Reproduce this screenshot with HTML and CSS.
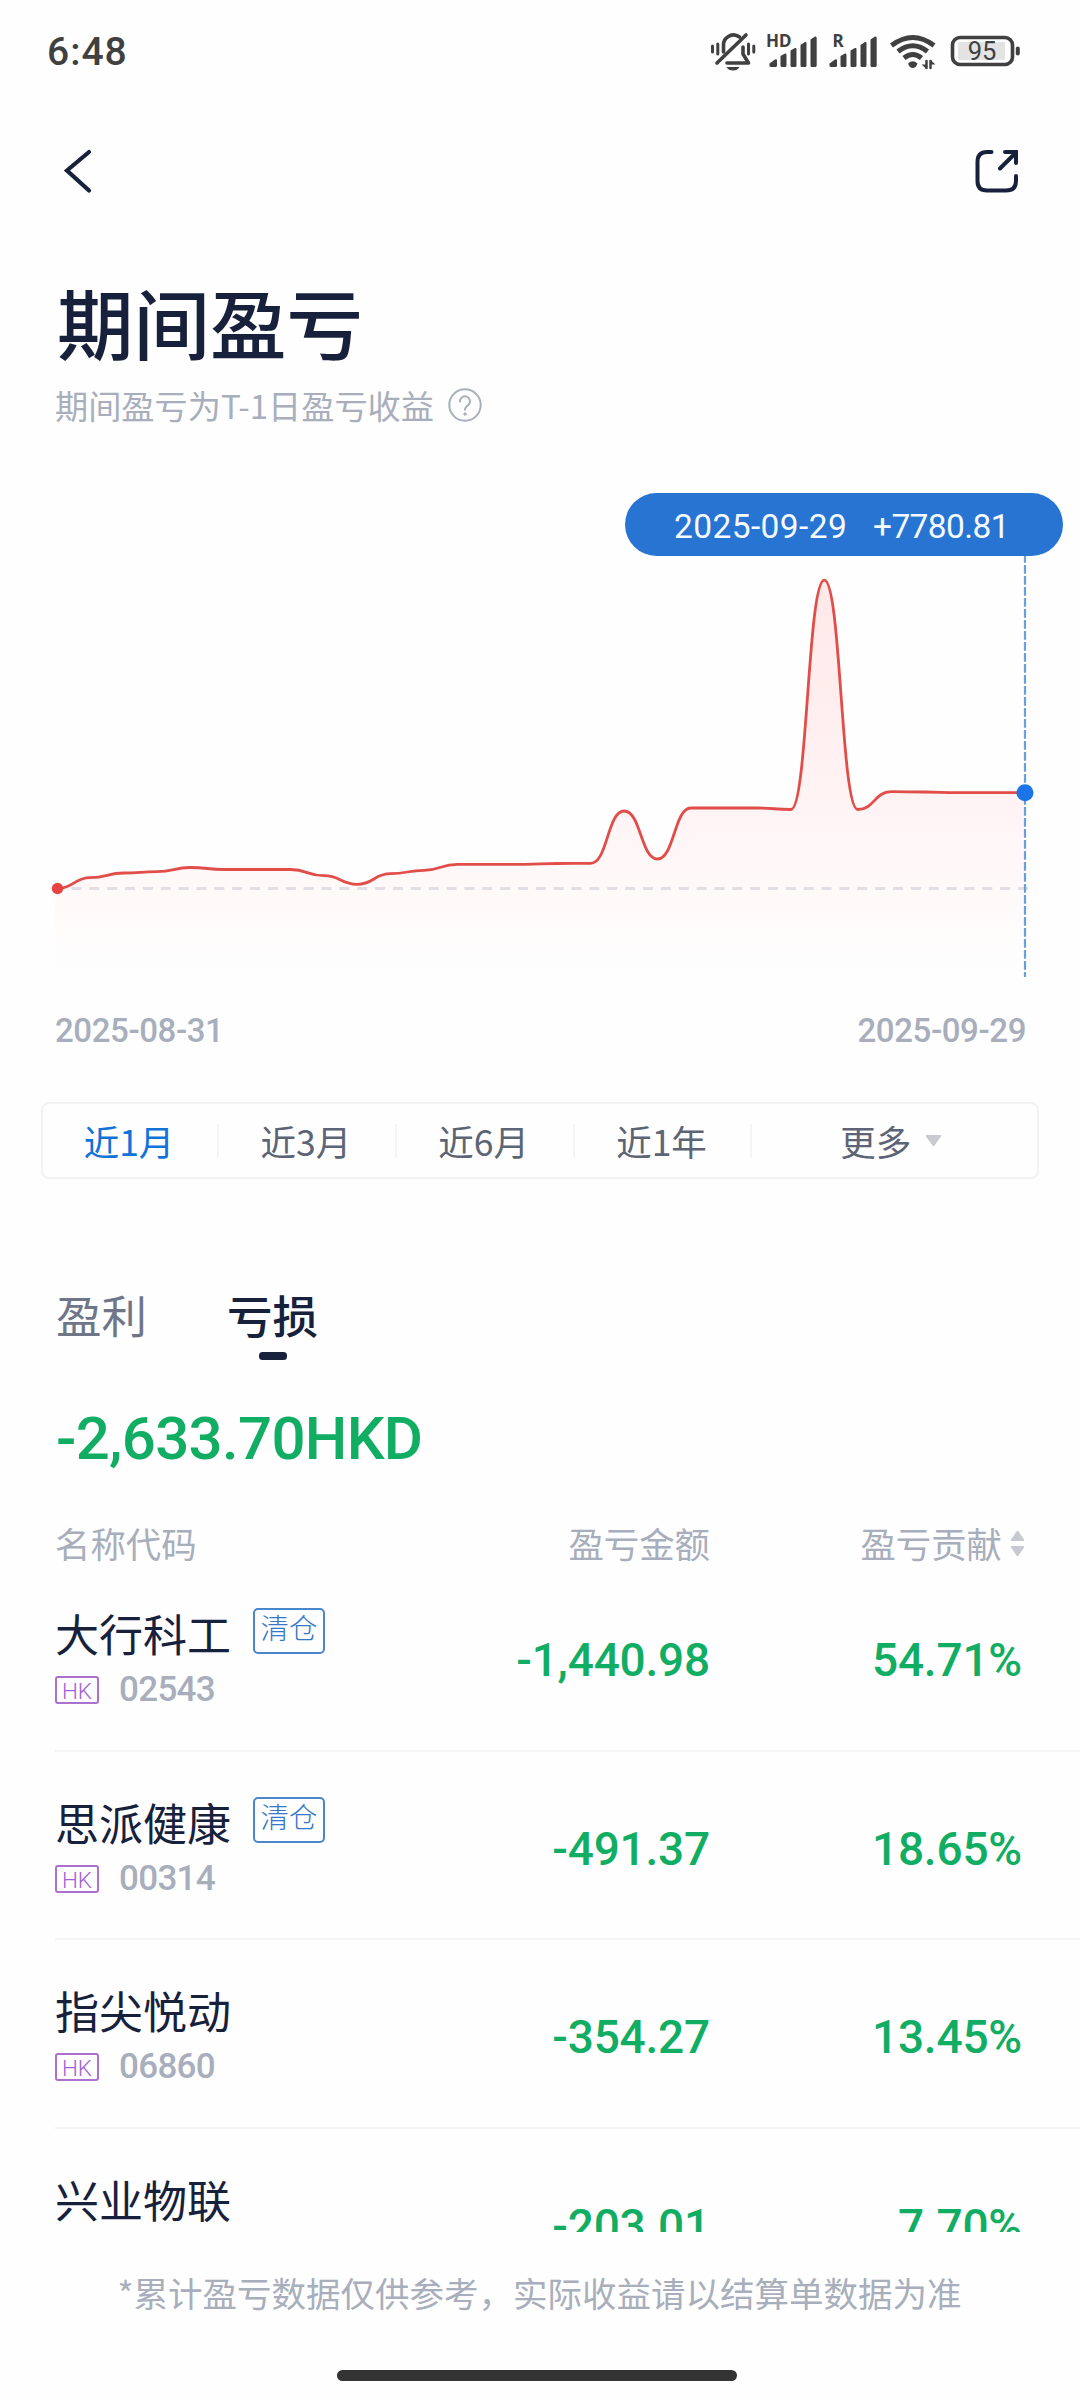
FILE: index.html
```html
<!DOCTYPE html>
<html lang="zh-CN">
<head>
<meta charset="utf-8">
<title>期间盈亏</title>
<link rel="stylesheet" href="styles.css">
</head>
<body>
<main class="screen">
  <header class="status">
    <span class="clock">6:48</span>
    <svg class="status-icons" width="320" height="50" viewBox="705 25 320 50" fill="none" stroke="#404040" stroke-width="3.6" stroke-linecap="round" stroke-linejoin="round">
      <path d="M712.500 46v6M717.800 44v10M753.800 46v6M748.500 44v10" stroke-width="3"/>
      <path d="M723.500 52V45a10 10 0 0 1 16-8"/>
      <path d="M743 47v7l5.500 9H727"/>
      <path d="M717 63L746 35"/>
      <path d="M726.500 67h13q-2 3.500-6.500 3.500t-6.500-3.500z" fill="#404040" stroke="none"/>
      <g fill="#404040" stroke="none">
        <text class="net" x="766" y="47">HD</text>
        <path id="bars" d="M769.500 63.500L775 59.500Q777 58.500 777 60.500V65.500Q777 67 775.500 67H771Q769 67 769.500 63.500zM780.500 56L785 53.500Q786.500 53 786.500 55V65.500Q786.500 67 785 67H782Q780.500 67 780.500 65.500zM790.500 50.500L795 48Q796.500 47.500 796.500 49V65.500Q796.500 67 795 67H792Q790.500 67 790.500 65.500zM800.500 45L805 42Q806.500 41.500 806.500 43V65.500Q806.500 67 805 67H802Q800.500 67 800.500 65.500zM810.500 39.500L815 36.500Q816.700 36 816.700 38V65.500Q816.700 67 815 67H812Q810.500 67 810.500 65.500z"/>
        <use href="#bars" x="60"/>
        <text class="net" x="832.500" y="47">R</text>
      </g>
      <g stroke-linecap="butt" stroke-width="5">
        <path d="M891.500 45.500Q912.800 29.500 934 45.500"/>
        <path d="M898 51.500Q912.800 40 927.500 51.500"/>
        <path d="M904 58Q912.800 51 921.500 58"/>
      </g>
      <path d="M908 63.500q4.800-4.500 9.500 0q-1.500 4.500-4.700 4.500t-4.800-4.500z" fill="#404040" stroke="none"/>
      <path d="M926.500 60v9l-5-4.500h5M930.500 69V60l5 4.500h-5" fill="#404040" stroke="none"/>
      <path d="M926.500 61v7M930.500 61v7" stroke-width="2.500"/>
      <rect x="952.500" y="37.500" width="60" height="27" rx="7.500"/>
      <rect x="958" y="42" width="47" height="18" rx="1" fill="#e3e3e3" stroke="none"/>
      <path d="M1017.800 48.500v5" stroke-width="4"/>
      <text class="battery" x="982" y="60" text-anchor="middle">95</text>
    </svg>
  </header>

  <nav class="topbar">
    <svg width="30" height="48" viewBox="63 147 30 48" fill="none" stroke="#17213c" stroke-width="4.200" stroke-linecap="round"><path d="M89 152L67 170.500L89 190.500"/></svg>
    <svg width="48" height="48" viewBox="973 146 48 48" fill="none" stroke="#17213c" stroke-width="4" stroke-linecap="round"><path d="M991.500 151H987Q977.500 151 977.500 161V180Q977.500 189.500 987 189.500H1006Q1016 189.500 1016 180V175M1000 167.500L1016 151.500M1005 151H1016V162"/></svg>
  </nav>

  <section class="heading">
    <h1>期间盈亏</h1>
    <p>期间盈亏为T-1日盈亏收益
      <svg width="36" height="36" viewBox="0 0 36 36" fill="none" stroke="#a8aebb" stroke-width="2" stroke-linecap="round"><circle cx="18" cy="18" r="15.700"/><path d="M13 14.500a5 5 0 1 1 8.500 3.300q-3.500 2.600-3.500 5"/><circle cx="18" cy="27" r="1.200" fill="#a8aebb" stroke-width="1"/></svg>
    </p>
  </section>

  <section class="chart">
    <svg width="1080" height="490" viewBox="0 492 1080 490" fill="none">
      <defs><linearGradient id="area" gradientUnits="userSpaceOnUse" x1="0" y1="580" x2="0" y2="972"><stop offset="0" stop-color="#ffe8e8"/><stop offset=".55" stop-color="#fff3f4"/><stop offset=".79" stop-color="#fff9f9"/><stop offset="1" stop-color="#fefefe"/></linearGradient></defs>
      <path id="fill" fill="url(#area)"/>
      <path d="M53.600 888.500H1028" stroke="#dfdfe5" stroke-width="3" stroke-dasharray="10 7.860"/>
      <path id="line" stroke="#e14d49" stroke-width="2.800" stroke-linejoin="round"/>
      <path d="M1025 554V977" stroke="#6b9edf" stroke-width="2.200" stroke-dasharray="8.800 2.200"/>
      <circle cx="57.500" cy="888.500" r="5.700" fill="#e84343"/>
      <circle cx="1025" cy="792.700" r="8.500" fill="#1c75e6"/>
    </svg>
    <div class="tip"><span>2025-09-29</span><span class="gain">+7780.81</span></div>
  </section>
  <div class="dates"><span>2025-08-31</span><span>2025-09-29</span></div>

  <nav class="ranges">
    <span class="on">近1月</span><span>近3月</span><span>近6月</span><span>近1年</span>
    <span class="more">更多<svg width="17" height="12" viewBox="0 0 17 12"><path d="M1.500 0h14q1.500 0 .5 1.500L9.500 10.500q-1 1.500-2 0L1 1.500Q0 0 1.500 0z" fill="#c8cad0"/></svg></span>
  </nav>

  <nav class="tabs"><span>盈利</span><span class="on">亏损</span></nav>
  <div class="total">-2,633.70HKD</div>

  <section class="list">
    <div class="cols head"><span>名称代码</span><span class="num">盈亏金额</span><span class="num sort">盈亏贡献<svg width="15" height="27" viewBox="0 0 15 27" fill="#c6c9cf"><path d="M6.500 1.500q1-1.500 2 0L14 9.500q.8 1.500-1 1.500H2q-1.800 0-1-1.500zM6.500 25.500q1 1.500 2 0L14 17.500q.8-1.500-1-1.500H2q-1.800 0-1 1.500z"/></svg></span></div>
    <div class="cols row">
      <div class="stock"><div class="name">大行科工<i>清仓</i></div><div class="code"><b>HK</b>02543</div></div>
      <span class="num">-1,440.98</span><span class="num">54.71%</span>
    </div>
    <div class="cols row">
      <div class="stock"><div class="name">思派健康<i>清仓</i></div><div class="code"><b>HK</b>00314</div></div>
      <span class="num">-491.37</span><span class="num">18.65%</span>
    </div>
    <div class="cols row">
      <div class="stock"><div class="name">指尖悦动</div><div class="code"><b>HK</b>06860</div></div>
      <span class="num">-354.27</span><span class="num">13.45%</span>
    </div>
    <div class="cols row">
      <div class="stock"><div class="name">兴业物联</div></div>
      <span class="num">-203.01</span><span class="num">7.70%</span>
    </div>
  </section>

  <footer>
    <p>*累计盈亏数据仅供参考，实际收益请以结算单数据为准</p>
    <div class="home"></div>
  </footer>
</main>
<script src="chart.js"></script>
</body>
</html>
```
FILE: styles.css
```css
* { box-sizing: border-box; }
body { margin: 0; background: #fefefe; font-family: "Noto Sans CJK SC", sans-serif; color: #17213c; }
svg { display: block; flex: none; }
h1, p { margin: 0; }
.screen { width: 1080px; height: 2400px; display: flex; flex-direction: column; overflow: hidden; }
.screen > * { flex: none; }

.status { height: 100px; padding: 25px 55px 0 47px; display: flex; justify-content: space-between; }
.clock { font: 500 39px/54px Roboto, sans-serif; letter-spacing: 1px; color: #404040; }
.net { font: 700 17px "Noto Sans", sans-serif; }
.battery { font: 400 25.500px Roboto, sans-serif; fill: #404040; stroke: none; }

.topbar { height: 142px; padding: 0 59px 0 63px; display: flex; justify-content: space-between; align-items: center; }

.heading { height: 250px; padding: 37px 0 0 57px; }
h1 { font-size: 76.500px; line-height: 84px; font-weight: 500; }
.heading p { display: flex; align-items: center; gap: 13px; margin: 22px 0 0 -2px; font-size: 33.200px; line-height: 40px; color: #a8aebb; }

.chart { height: 490px; position: relative; }
.tip { position: absolute; left: 625px; top: 1px; width: 438px; height: 63px; border-radius: 32px; background: #2774d2; color: #f4faff; display: flex; justify-content: space-between; padding: 0 54px 0 49px; font: 400 33.500px/67px Roboto, sans-serif; }
.tip span { letter-spacing: .4px; }
.tip .gain { letter-spacing: -.6px; }

.dates { height: 120px; padding: 29px 54px 0 55px; display: flex; justify-content: space-between; font: 500 33px/40px Roboto, sans-serif; letter-spacing: -.4px; color: #a8aebb; }

.ranges { height: 77px; margin: 0 41px 0 41px; border: 2px solid #f2f2f4; border-radius: 8px; display: grid; grid-template-columns: 176px repeat(3, 177.800px) 1fr; align-items: center; font-size: 35.500px; line-height: 34px; color: #5c6475; }
.ranges span { height: 34px; display: flex; align-items: center; justify-content: center; border-right: 2px solid #f4f4f6; padding-right: 2px; }
.ranges .on { color: #1173d8; }
.ranges .more { border: 0; gap: 14px; padding-right: 7px; }

.tabs { height: 181px; padding: 105px 0 0 56px; display: flex; gap: 80px; font-size: 45.500px; line-height: 60px; color: #6e7688; }
.tabs .on { color: #17213c; font-weight: 500; display: flex; flex-direction: column; align-items: center; }
.tabs .on::after { content: ""; width: 28px; height: 8px; border-radius: 3.500px; background: #17213c; margin-top: 8px; }
.total { height: 140px; padding: 44px 0 0 56px; font: 500 60px/70px Roboto, sans-serif; letter-spacing: -.7px; color: #11ad63; }

.list { height: 732px; overflow: hidden; padding-left: 55px; }
.cols { display: grid; grid-template-columns: 300px 355px 312px; }
.num { text-align: right; }
.head { height: 63px; padding-top: 21px; font-size: 35.400px; line-height: 44px; color: #a8aebb; }
.sort { display: flex; justify-content: flex-end; align-items: center; gap: 8px; margin-right: -3px; }
.row { height: 188.500px; border-bottom: 2px solid #f4f4f6; }
.row > .num { font: 500 46px/56px Roboto, sans-serif; letter-spacing: -.2px; color: #11ad63; padding-top: 69px; }
.name { display: flex; font-size: 44px; line-height: 60px; height: 60px; margin-top: 40px; }
.name i { width: 72px; height: 46px; margin: 5px 0 0 22px; border: 2px solid #4a86cc; border-radius: 5px; font: 300 28.500px/34px "Noto Sans CJK SC", sans-serif; text-align: center; color: #3577c8; }
.code { display: flex; align-items: center; margin-top: 7px; font: 500 35px/40px Roboto, sans-serif; letter-spacing: -.7px; color: #a8aebb; }
.code b { width: 44px; height: 28px; border: 2px solid #ac70cf; border-radius: 3px; margin-right: 20px; font: 300 22.500px/26px Roboto, sans-serif; letter-spacing: 0; text-align: center; color: #a25fd6; }

footer { height: 168px; padding-top: 38px; display: flex; flex-direction: column; align-items: center; }
footer p { font-size: 34.500px; line-height: 44px; color: #a8aebb; margin-left: -1px; }
.home { width: 400px; height: 11px; border-radius: 6px; background: #333; margin: 56px 0 0 -7px; }
```
FILE: chart.js
```js
// Thirty daily readings, evenly spaced along the time axis.
const ys = [888.5, 877.7, 873, 871.7, 867.5, 869.5, 869.5, 869.5, 875.7, 884.3, 873.7, 870.3, 864.3, 864.3, 864.3, 863.5, 863.3, 811, 859, 808, 808, 808, 809.5, 580.2, 809.5, 791.7, 792, 792.7, 792.7, 792.7];
const x0 = 57;
const step = (1024.5 - x0) / (ys.length - 1);
let d = `M${x0} ${ys[0]}`;
for (let i = 1; i < ys.length; i++) {
  const x = x0 + step * i;
  d += ` C${x - step / 2} ${ys[i - 1]} ${x - step / 2} ${ys[i]} ${x} ${ys[i]}`;
}
document.getElementById('line').setAttribute('d', d);
document.getElementById('fill').setAttribute('d', d + ' V972 H55 V888.5Z');
```
